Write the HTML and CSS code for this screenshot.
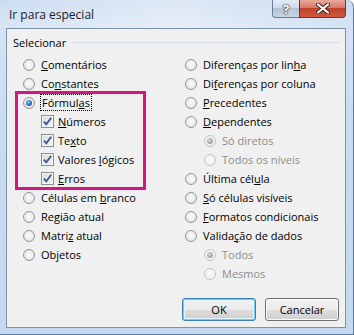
FILE: index.html
```html
<!DOCTYPE html>
<html lang="pt">
<head>
    <meta charset="UTF-8">
    <title>Ir para especial</title>
    <link rel="stylesheet" href="styles.css">
</head>
<body>
    <div class="window">
        <div class="titlebar">
            <span class="title">Ir para especial</span>
            <div class="caption-buttons">
                <span class="cap-btn help-btn">?</span>
                <span class="cap-btn close-btn">
                    <svg width="14" height="11" viewBox="0 0 14 11">
                        <path d="M2 1.5 L12 9.5 M12 1.5 L2 9.5" stroke="#3a2020" stroke-width="4" stroke-linecap="round"/>
                        <path d="M2 1.5 L12 9.5 M12 1.5 L2 9.5" stroke="#fff" stroke-width="2.2" stroke-linecap="round"/>
                    </svg>
                </span>
            </div>
        </div>

        <div class="client">
            <div class="group">
                <div class="group-head"><span class="group-label">Selecionar</span></div>
                <div class="columns">
                    <div class="col col-left">
                        <div class="row"><span class="radio"></span><span><u>C</u>omentários</span></div>
                        <div class="row"><span class="radio"></span><span>Co<u>n</u>stantes</span></div>
                        <div class="row"><span class="radio checked"></span><span class="focus">Fórmul<u>a</u>s</span></div>
                        <div class="row sub"><span class="check"><svg width="11" height="11" viewBox="0 0 11 11"><path d="M1.8 5.6 L4.3 8.3 L9.2 1.8" fill="none" stroke="#3d5a92" stroke-width="1.9"/></svg></span><span><u>N</u>úmeros</span></div>
                        <div class="row sub"><span class="check"><svg width="11" height="11" viewBox="0 0 11 11"><path d="M1.8 5.6 L4.3 8.3 L9.2 1.8" fill="none" stroke="#3d5a92" stroke-width="1.9"/></svg></span><span>Te<u>x</u>to</span></div>
                        <div class="row sub"><span class="check"><svg width="11" height="11" viewBox="0 0 11 11"><path d="M1.8 5.6 L4.3 8.3 L9.2 1.8" fill="none" stroke="#3d5a92" stroke-width="1.9"/></svg></span><span>Valores <u>l</u>ógicos</span></div>
                        <div class="row sub"><span class="check"><svg width="11" height="11" viewBox="0 0 11 11"><path d="M1.8 5.6 L4.3 8.3 L9.2 1.8" fill="none" stroke="#3d5a92" stroke-width="1.9"/></svg></span><span><u>E</u>rros</span></div>
                        <div class="row"><span class="radio"></span><span>Células em <u>b</u>ranco</span></div>
                        <div class="row"><span class="radio"></span><span>Re<u>g</u>ião atual</span></div>
                        <div class="row"><span class="radio"></span><span>Matri<u>z</u> atual</span></div>
                        <div class="row"><span class="radio"></span><span>Ob<u>j</u>etos</span></div>
                    </div>
                    <div class="col col-right">
                        <div class="row"><span class="radio"></span><span>Diferenças por lin<u>h</u>a</span></div>
                        <div class="row"><span class="radio"></span><span>Di<u>f</u>erenças por coluna</span></div>
                        <div class="row"><span class="radio"></span><span><u>P</u>recedentes</span></div>
                        <div class="row"><span class="radio"></span><span><u>D</u>ependentes</span></div>
                        <div class="row sub disabled"><span class="radio checked"></span><span>Só diretos</span></div>
                        <div class="row sub disabled"><span class="radio"></span><span>Todos os níveis</span></div>
                        <div class="row"><span class="radio"></span><span>Última cél<u>u</u>la</span></div>
                        <div class="row"><span class="radio"></span><span><u>S</u>ó células visíveis</span></div>
                        <div class="row"><span class="radio"></span><span><u>F</u>ormatos condicionais</span></div>
                        <div class="row"><span class="radio"></span><span>Valida<u>ç</u>ão de dados</span></div>
                        <div class="row sub disabled"><span class="radio checked"></span><span>Todos</span></div>
                        <div class="row sub disabled"><span class="radio"></span><span>Mesmos</span></div>
                    </div>
                </div>
            </div>

            <div class="buttons">
                <button class="btn btn-default">OK</button>
                <button class="btn">Cancelar</button>
            </div>

            <div class="highlight"></div>
        </div>
    </div>
</body>
</html>
```

FILE: styles.css
```css
body {
    margin: 0;
    background: #fff;
    font-family: 'Open Sans', 'Noto Sans', sans-serif;
    font-size: 11px;
    color: #000;
}
.window {
    width: 354px;
    height: 335px;
    box-sizing: border-box;
    display: flex;
    flex-direction: column;
    background: linear-gradient(180deg, #c3d6ee 0%, #d4e3f5 10%, #c9dbf1 40%, #c4d8ef 100%);
    border-right: 1px solid #5f7a9a;
    border-bottom: 1px solid #5f7a9a;
    border-top-right-radius: 7px;
    overflow: hidden;
}
.titlebar {
    height: 28px;
    flex: none;
    display: flex;
    justify-content: space-between;
    align-items: flex-start;
    background: linear-gradient(90deg, rgba(255,255,255,0.15) 0%, rgba(255,255,255,0.45) 50%, rgba(255,255,255,0.1) 100%);
}
.title {
    font-size: 12px;
    color: #1b1b1b;
    padding: 6px 0 0 9px;
}
.caption-buttons {
    display: flex;
    margin-right: 7px;
}
.cap-btn {
    height: 18px;
    display: flex;
    align-items: center;
    justify-content: center;
    box-sizing: border-box;
    border: 1px solid #6a7d95;
    border-top: none;
}
.help-btn {
    width: 27px;
    border-right: none;
    border-bottom-left-radius: 4px;
    background: linear-gradient(180deg, #e4ecf6 0%, #cfdbe9 45%, #b3c3d6 50%, #c8d6e6 100%);
    color: #fff;
    font-weight: bold;
    font-size: 13px;
    text-shadow: 0 0 1px #27384d, 0 0 1px #27384d, 0 0 2px #27384d;
}
.close-btn {
    width: 47px;
    border-color: #7a3026;
    border-bottom-right-radius: 4px;
    background: linear-gradient(180deg, #e9a99c 0%, #d77a69 45%, #c2402a 50%, #d25a40 100%);
}
.client {
    flex: 1;
    margin: 0 7px 6px 6px;
    background: #f0f0f0;
    border: 1px solid #7f93ac;
    position: relative;
    display: flex;
    flex-direction: column;
}
.group {
    padding: 4px 5px 0 6px;
}
.group-head {
    display: flex;
    align-items: center;
    height: 19px;
    margin-bottom: 3px;
}
.group-head::after {
    content: "";
    flex: 1;
    border-top: 1px solid #d5dfe5;
    margin-left: 6px;
}
.columns {
    display: flex;
}
.col-left {
    width: 162px;
    padding-left: 10px;
}
.col {
    display: flex;
    flex-direction: column;
}
.row {
    height: 19px;
    display: flex;
    align-items: center;
    white-space: nowrap;
}
.row.sub {
    padding-left: 18px;
}
.col-right .row.sub {
    padding-left: 19px;
}
.disabled {
    color: #8d8d8d;
}
.radio {
    width: 12px;
    height: 12px;
    box-sizing: border-box;
    border-radius: 50%;
    border: 1px solid #979797;
    background: radial-gradient(circle at 50% 45%, #fdfdfd 0%, #ececec 55%, #d3d3d3 100%);
    margin-right: 6px;
    display: flex;
    align-items: center;
    justify-content: center;
    flex: none;
}
.radio.checked::after {
    content: "";
    width: 6px;
    height: 6px;
    border-radius: 50%;
    background: radial-gradient(circle at 40% 35%, #9cc6f2 0%, #2f72c4 50%, #123f86 100%);
}
.disabled .radio {
    border-color: #c4c4c4;
    background: radial-gradient(circle at 50% 45%, #fbfbfb 0%, #f2f2f2 60%, #e4e4e4 100%);
}
.disabled .radio.checked::after {
    background: radial-gradient(circle at 40% 35%, #d6d6d6 0%, #a9a9a9 60%, #8f8f8f 100%);
}
.check {
    width: 13px;
    height: 13px;
    box-sizing: border-box;
    border: 1px solid #8e8f8f;
    background: linear-gradient(135deg, #dcdcdc 0%, #f6f6f6 100%);
    box-shadow: inset 0 0 0 1px #f4f4f4;
    margin-right: 4px;
    display: flex;
    align-items: center;
    justify-content: center;
    flex: none;
}
.focus {
    outline: 1px dotted #000;
    outline-offset: 0;
    padding: 0 1px;
    line-height: 15px;
}
u {
    text-decoration-thickness: 1px;
    text-underline-offset: 1px;
}
.buttons {
    display: flex;
    justify-content: flex-end;
    gap: 9px;
    margin-top: auto;
    padding: 0 6px 6px 0;
}
.btn {
    width: 74px;
    height: 23px;
    font-family: inherit;
    font-size: 11px;
    color: #000;
    border: 1px solid #707070;
    border-radius: 3px;
    background: linear-gradient(180deg, #f2f2f2 0%, #ebebeb 50%, #dddddd 51%, #cfcfcf 100%);
    box-shadow: inset 0 0 0 1px #fbfbfb;
    padding: 0;
}
.btn-default {
    border-color: #3c7fb1;
    box-shadow: inset 0 0 0 1px #6fd0f5, inset 0 0 0 2px #e2f3fb;
}
.highlight {
    position: absolute;
    left: 8px;
    top: 62px;
    width: 131px;
    height: 99px;
    box-sizing: border-box;
    border: 3px solid #d6157f;
    pointer-events: none;
}
```
